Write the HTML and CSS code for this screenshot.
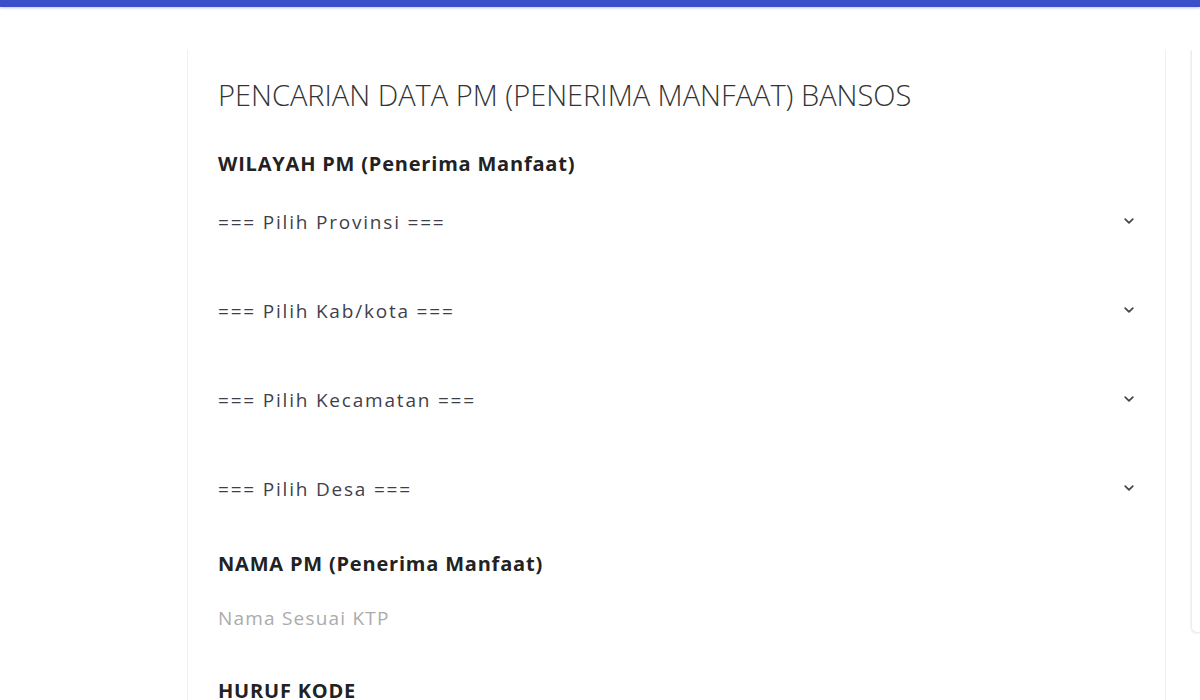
FILE: index.html
```html
<!doctype html>
<html lang="id">
<head>
  <meta charset="utf-8">
  <title>Pencarian Data PM Bansos</title>
  <link rel="stylesheet" href="styles.css">
</head>
<body>
  <div class="topbar"></div>
  <div class="page">
    <div class="card">
      <div class="card-title">PENCARIAN DATA PM (PENERIMA MANFAAT) BANSOS</div>
      <form class="cek-form" autocomplete="off">
        <label class="field-label">WILAYAH PM (Penerima Manfaat)</label>
        <div class="select-wrap">
          <select id="provinsi"><option>=== Pilih Provinsi ===</option></select>
          <svg class="chev" width="10" height="6" viewBox="0 0 10 6"><path d="M1.2 1.2 5 4.8 8.8 1.2" fill="none" stroke="#444" stroke-width="1.7" stroke-linecap="round" stroke-linejoin="round"/></svg>
        </div>
        <div class="select-wrap">
          <select id="kabupaten"><option>=== Pilih Kab/kota ===</option></select>
          <svg class="chev" width="10" height="6" viewBox="0 0 10 6"><path d="M1.2 1.2 5 4.8 8.8 1.2" fill="none" stroke="#444" stroke-width="1.7" stroke-linecap="round" stroke-linejoin="round"/></svg>
        </div>
        <div class="select-wrap">
          <select id="kecamatan"><option>=== Pilih Kecamatan ===</option></select>
          <svg class="chev" width="10" height="6" viewBox="0 0 10 6"><path d="M1.2 1.2 5 4.8 8.8 1.2" fill="none" stroke="#444" stroke-width="1.7" stroke-linecap="round" stroke-linejoin="round"/></svg>
        </div>
        <div class="select-wrap">
          <select id="desa"><option>=== Pilih Desa ===</option></select>
          <svg class="chev" width="10" height="6" viewBox="0 0 10 6"><path d="M1.2 1.2 5 4.8 8.8 1.2" fill="none" stroke="#444" stroke-width="1.7" stroke-linecap="round" stroke-linejoin="round"/></svg>
        </div>
        <label class="field-label" for="nama">NAMA PM (Penerima Manfaat)</label>
        <input id="nama" type="text" placeholder="Nama Sesuai KTP">
        <label class="field-label">HURUF KODE</label>
      </form>
    </div>
    <div class="side"></div>
  </div>
</body>
</html>
```

FILE: styles.css
```css
html, body {
  margin: 0;
  padding: 0;
  background: #fff;
}
body {
  font-family: 'Open Sans', Arial, sans-serif;
  color: #333;
  overflow: hidden;
}
.topbar {
  height: 7px;
  background: #3a4fc8;
  box-shadow: 0 1px 3px #3a4fc855;
}
.page {
  display: flex;
  align-items: flex-start;
  padding: 43px 0 0 187px;
  gap: 25px;
}
.card {
  width: 980px;
  box-sizing: border-box;
  min-height: 700px;
  border-left: 1px solid #f0f0f0;
  border-right: 1px solid #f0f0f0;
  padding: 26px 30px 0 30px;
}
.card-title {
  font-size: 29px;
  font-weight: 300;
  line-height: 38px;
  color: #333;
  margin-bottom: 37px;
}
.cek-form {
  display: flex;
  flex-direction: column;
}
.field-label {
  font-size: 20px;
  font-weight: 700;
  letter-spacing: 0.8px;
  line-height: 26px;
  color: #222;
  margin-bottom: 18px;
}
.select-wrap {
  position: relative;
  margin-bottom: 35px;
}
select, input {
  width: 100%;
  height: 54px;
  box-sizing: border-box;
  border: none;
  outline: none;
  background: transparent;
  font-family: 'Open Sans', Arial, sans-serif;
  font-size: 19px;
  letter-spacing: 1.8px;
  padding: 0;
  color: #3f3f4c;
  appearance: none;
  -webkit-appearance: none;
}
.chev {
  position: absolute;
  right: 1px;
  top: 23px;
}
input {
  margin-top: -4px;
  margin-bottom: 33px;
  letter-spacing: 1.2px;
}
input::placeholder {
  color: #ababab;
}
.side {
  width: 8px;
  height: 582px;
  border-left: 1px solid #ececec;
  border-bottom: 1px solid #ececec;
  border-bottom-left-radius: 6px;
  box-shadow: -1px 1px 2px #0000000d;
}
```
